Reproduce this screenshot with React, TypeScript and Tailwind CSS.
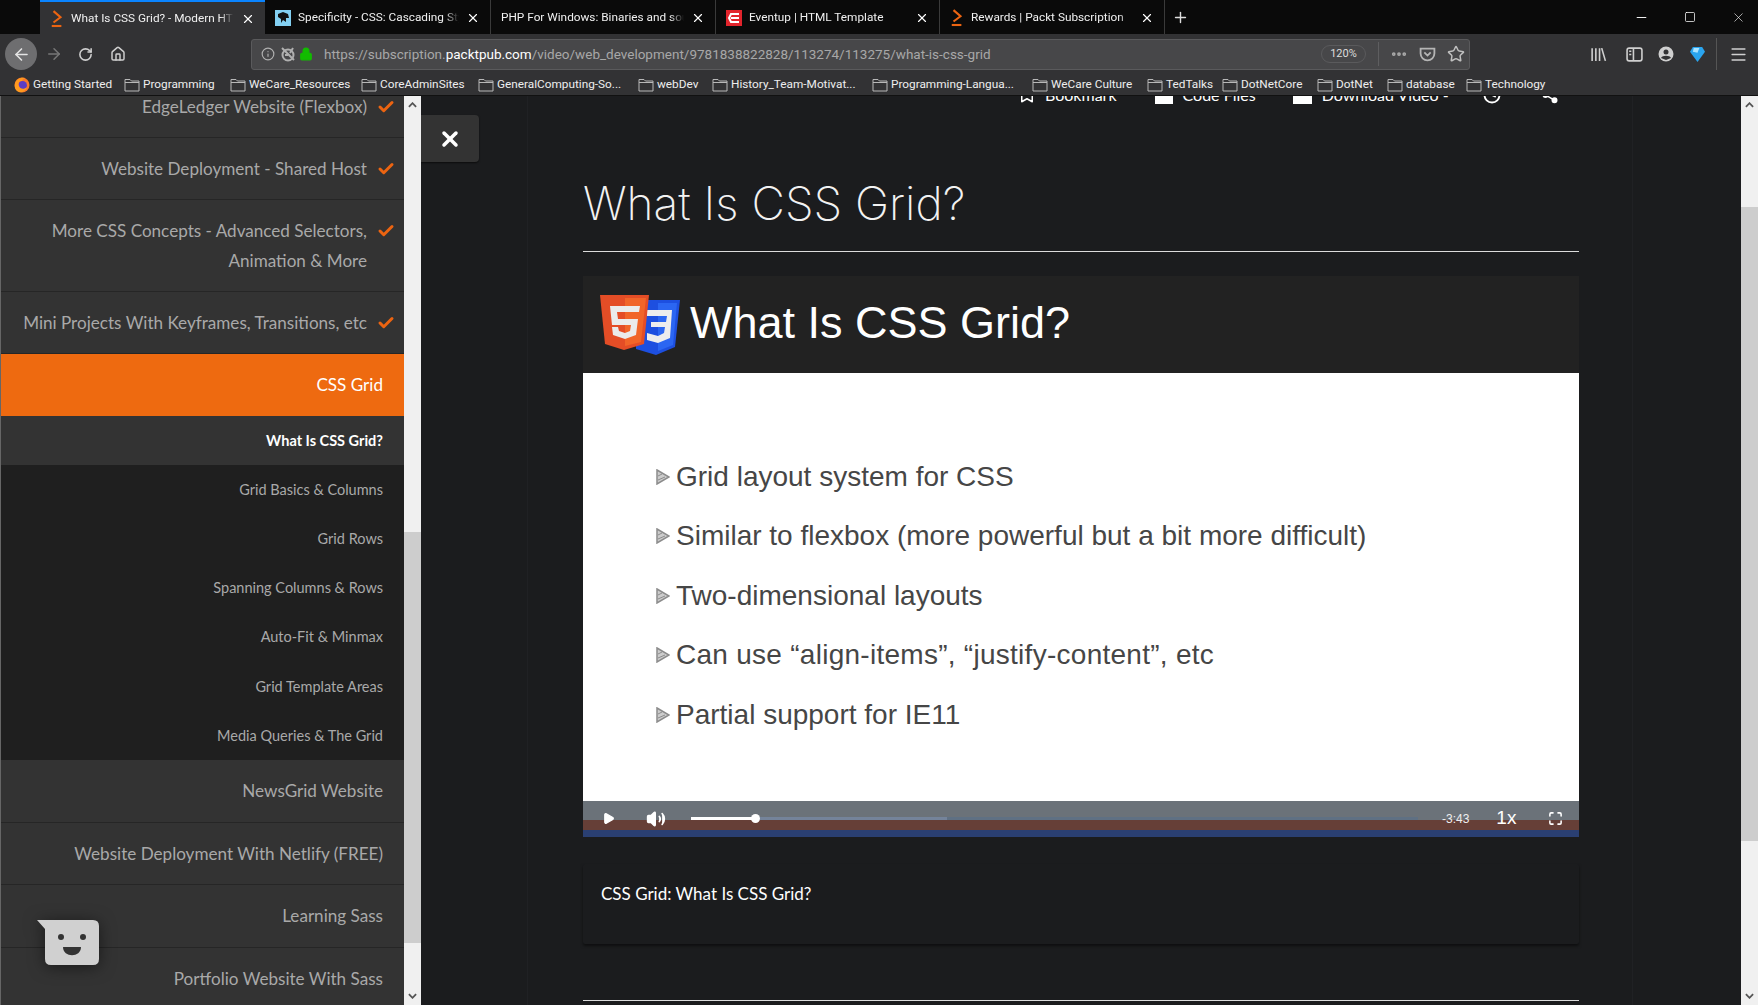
import { ArrowLeft, ArrowRight, Check, Home, Info, Lock, Maximize, Menu, Minus, MoreHorizontal, Play, Plus, RotateCw, Share2, Square, Star, Volume2, X, Clock, Bookmark } from 'lucide-react';

const chrome = "font-['Roboto',sans-serif]";
const lato = "font-['Lato',sans-serif]";

function PacktIcon() {
  return (
    <svg viewBox="0 0 16 20" className="w-[14px] h-[18px] shrink-0">
      <path d="M4 1 L12 8 L4 14" fill="none" stroke="#ec6411" strokeWidth="2.4" />
      <path d="M2 18 H13" stroke="#ec6411" strokeWidth="2.4" />
    </svg>
  );
}

function MdnIcon() {
  return (
    <svg viewBox="0 0 16 16" className="w-4 h-4 shrink-0">
      <rect width="16" height="16" fill="#83d0f2" />
      <path d="M3 4 L8 2 L13 4 L14 8 L11 8 L11 12 L8 10 L6 13 L6 9 L3 7 Z" fill="#111" />
    </svg>
  );
}

function EventupIcon() {
  return (
    <svg viewBox="0 0 16 16" className="w-4 h-4 shrink-0">
      <rect width="16" height="16" fill="#e2242c" />
      <path d="M13 4 L5 4 L3 8 L5 12 L13 12 M5 8 L13 8" fill="none" stroke="#fff" strokeWidth="2" />
    </svg>
  );
}

function FirefoxIcon() {
  return (
    <svg viewBox="0 0 16 16" className="w-4 h-4 shrink-0">
      <circle cx="8" cy="8" r="7.5" fill="#f9792a" />
      <circle cx="8.5" cy="8.5" r="4.5" fill="#5b3cc4" />
      <path d="M1 7 C2 2 7 0 11 1 C9 2 8 3 8 4 C5 4 4 6 5 9 C6 12 10 13 13 10 C12 14 8 16 5 15 C2 14 0 11 1 7 Z" fill="#ff9a1f" />
    </svg>
  );
}

function FolderIcon() {
  return (
    <svg viewBox="0 0 16 16" className="w-[16px] h-[16px] shrink-0" fill="none" stroke="#b8b8b8" strokeWidth="1">
      <path d="M1 2.500 H6 L7.500 4 H15 V14 H1 Z" />
      <path d="M1 5.500 H15" />
    </svg>
  );
}

const tabs = [
  { title: 'What Is CSS Grid? - Modern HTML', icon: <PacktIcon />, active: true, w: 'w-[225px]' },
  { title: 'Specificity - CSS: Cascading Style', icon: <MdnIcon />, w: 'w-[226px]' },
  { title: 'PHP For Windows: Binaries and sources', w: 'w-[225px]' },
  { title: 'Eventup | HTML Template', icon: <EventupIcon />, w: 'w-[224px]' },
  { title: 'Rewards | Packt Subscription', icon: <PacktIcon />, w: 'w-[225px]' },
];

const bookmarks = [
  { label: 'Getting Started', w: 'w-[110px]', fx: true },
  { label: 'Programming', w: 'w-[106px]' },
  { label: 'WeCare_Resources', w: 'w-[131px]' },
  { label: 'CoreAdminSites', w: 'w-[117px]' },
  { label: 'GeneralComputing-So...', w: 'w-[160px]' },
  { label: 'webDev', w: 'w-[74px]' },
  { label: 'History_Team-Motivat...', w: 'w-[160px]' },
  { label: 'Programming-Langua...', w: 'w-[160px]' },
  { label: 'WeCare Culture', w: 'w-[115px]' },
  { label: 'TedTalks', w: 'w-[75px]' },
  { label: 'DotNetCore', w: 'w-[95px]' },
  { label: 'DotNet', w: 'w-[70px]' },
  { label: 'database', w: 'w-[79px]' },
  { label: 'Technology', w: 'w-[90px]' },
];

function TabStrip() {
  return (
    <div className="h-[34px] bg-[#0a0a0a] flex pl-[40px] items-stretch">
      {tabs.map((t) => (
        <div
          key={t.title}
          className={`${t.w} flex items-center gap-[7px] pl-[10px] pr-[10px] pt-[2px] border-r border-[#3a3a3a] ${t.active ? 'bg-[#323234] border-t-2 border-t-[#0a84ff] border-r-0' : ''}`}
        >
          {t.icon}
          <span className="flex-1 min-w-0 overflow-hidden whitespace-nowrap text-[11.800px] text-[#f0f0f0] [mask-image:linear-gradient(to_left,transparent,black_14px)]">
            {t.title}
          </span>
          <X className="w-[14px] h-[14px] shrink-0 text-white" />
        </div>
      ))}
      <div className="w-[30px] flex items-center justify-center">
        <Plus className="w-[17px] h-[17px] text-[#ddd]" />
      </div>
      <div className="flex-1" />
      <div className="flex items-center pr-[12px] gap-[35px] text-white">
        <Minus className="w-[15px] h-[15px]" strokeWidth={1.5} />
        <Square className="w-[12px] h-[12px]" strokeWidth={1.5} />
        <X className="w-[15px] h-[15px]" strokeWidth={1} />
      </div>
    </div>
  );
}

function Toolbar() {
  return (
    <div className="h-[40px] bg-[#323234] flex items-center text-[#cfcfcf]">
      <div className="ml-[5px] w-[32px] h-[32px] rounded-full bg-[#6e6e70] flex items-center justify-center shrink-0">
        <ArrowLeft className="w-[19px] h-[19px] text-[#e4e4e4]" />
      </div>
      <ArrowRight className="ml-[8px] w-[18px] h-[18px] text-[#777] shrink-0" />
      <RotateCw className="ml-[15px] w-[15px] h-[15px] shrink-0" strokeWidth={2.5} />
      <Home className="ml-[17px] w-[16px] h-[16px] shrink-0" strokeWidth={2.2} />
      <div className="ml-[125px] w-[1219px] h-[31px] rounded-[3px] bg-[#474749] border border-[#5a5a5c] flex items-center pl-[9px] pr-[4px] shrink-0">
        <Info className="w-[14px] h-[14px] text-[#b0b0b0] shrink-0" />
        <svg viewBox="0 0 16 16" className="ml-[5px] w-[16px] h-[16px] shrink-0" fill="none" stroke="#b0b0b0" strokeWidth="2">
          <circle cx="8" cy="9" r="5.500" />
          <path d="M2 2 L14 14 M5 9 H8 M13 2 L10 7" />
        </svg>
        <Lock className="ml-[3px] w-[14px] h-[14px] text-[#12bc00] fill-[#12bc00] shrink-0" />
        <span className="ml-[11px] text-[13.500px] whitespace-nowrap text-[#a8a8a8]">
          https://subscription.<span className="text-white">packtpub.com</span>/video/web_development/9781838822828/113274/113275/what-is-css-grid
        </span>
        <div className="flex-1" />
        <span className="w-[45px] h-[18px] rounded-full border border-[#5a5a5c] text-[11px] text-[#ddd] flex items-center justify-center">120%</span>
        <div className="ml-[12px] w-px h-[24px] bg-[#5e5e60]" />
        <MoreHorizontal className="ml-[11px] w-[18px] h-[18px] text-[#aaa]" strokeWidth={3} />
        <svg viewBox="0 0 16 16" className="ml-[11px] w-[17px] h-[17px]" fill="none" stroke="#b5b5b5" strokeWidth="1.700">
          <path d="M1.500 2.500 H14.500 V7 A6.500 6.500 0 0 1 1.500 7 Z M5 6 L8 9 L11 6" />
        </svg>
        <Star className="ml-[11px] w-[18px] h-[18px] text-[#c0c0c0]" strokeWidth={2} />
      </div>
      <div className="flex-1" />
      <div className="flex items-center pr-[10px]">
        <svg viewBox="0 0 16 16" className="w-[17px] h-[17px]" fill="none" stroke="#cfcfcf" strokeWidth="1.500">
          <path d="M2 2 V14 M5.500 2 V14 M9 2 V14 M11 2 L14.500 14" />
        </svg>
        <svg viewBox="0 0 16 16" className="ml-[19px] w-[17px] h-[17px]" fill="none" stroke="#cfcfcf" strokeWidth="1.500">
          <rect x="1" y="2" width="14" height="12" rx="2" />
          <path d="M7 2 V14 M3 5 H5 M3 8 H5" />
        </svg>
        <svg viewBox="0 0 16 16" className="ml-[15px] w-[16px] h-[16px]">
          <circle cx="8" cy="8" r="7.500" fill="#cfcfcf" />
          <circle cx="8" cy="6" r="2.500" fill="#323234" />
          <path d="M3 12 C4 9 12 9 13 12 L8 14 Z" fill="#323234" />
        </svg>
        <svg viewBox="0 0 16 18" className="ml-[16px] w-[15px] h-[17px]">
          <path d="M3 1 H13 L16 6 L8 17 L0 6 Z" fill="#2aa5ef" />
          <path d="M4 2 H10 L8 7 L3 6 Z" fill="#a9e3ff" />
        </svg>
        <div className="ml-[11px] w-px h-[32px] bg-[#555]" />
        <Menu className="ml-[12px] w-[19px] h-[19px] text-[#d0d0d0]" strokeWidth={2} />
      </div>
    </div>
  );
}

function Bookmarks() {
  return (
    <div className="h-[22px] bg-[#323234] border-b border-[#111] flex items-center pl-[14px] text-[11.800px] text-[#eee]">
      {bookmarks.map((b) => (
        <div key={b.label} className={`${b.w} shrink-0 flex items-center gap-[3px] whitespace-nowrap`}>
          {b.fx ? <FirefoxIcon /> : <FolderIcon />}
          <span>{b.label}</span>
        </div>
      ))}
    </div>
  );
}

const checkedTop = [
  { label: 'EdgeLedger Website (Flexbox)' },
  { label: 'Website Deployment - Shared Host' },
  { label: 'More CSS Concepts - Advanced Selectors, Animation & More', tall: true },
  { label: 'Mini Projects With Keyframes, Transitions, etc' },
];

const subItems = ['What Is CSS Grid?', 'Grid Basics & Columns', 'Grid Rows', 'Spanning Columns & Rows', 'Auto-Fit & Minmax', 'Grid Template Areas', 'Media Queries & The Grid'];
const afterItems = ['NewsGrid Website', 'Website Deployment With Netlify (FREE)', 'Learning Sass', 'Portfolio Website With Sass'];

function Sidebar() {
  return (
    <div className={`w-[404px] shrink-0 h-full overflow-hidden bg-[#333333] border-l border-[#666] ${lato}`}>
      <div className="-mt-[20px]">
        {checkedTop.map((row) => (
          <div
            key={row.label}
            className={`flex justify-end pl-[10px] pr-[9px] gap-[10px] border-b border-[#262626] ${row.tall ? 'h-[92px] items-start pt-[16px]' : 'h-[62px] items-center'}`}
          >
            <span className="text-[17.100px] leading-[30px] text-[#a9a9a9] text-right">{row.label}</span>
            <Check className={`w-[18px] h-[18px] shrink-0 text-[#ec6411] ${row.tall ? 'mt-[6px]' : ''}`} strokeWidth={4} />
          </div>
        ))}
        <div className="h-[62px] bg-[#ee6a10] flex items-center justify-end pr-[21px] text-[17.100px] text-white">CSS Grid</div>
        {subItems.map((s, i) => (
          <div
            key={s}
            className={`h-[49.200px] flex items-center justify-end pr-[21px] text-[14.500px] ${i === 0 ? 'bg-[#333333] text-white font-bold' : 'bg-[#1f1f1f] text-[#a9a9a9]'}`}
          >
            {s}
          </div>
        ))}
        {afterItems.map((s) => (
          <div key={s} className="h-[62.500px] flex items-center justify-end pr-[21px] text-[17.100px] text-[#a9a9a9] border-b border-[#262626]">
            {s}
          </div>
        ))}
      </div>
    </div>
  );
}

function Scrollbar({ before, thumb, after }: { before: string; thumb: string; after: string }) {
  return (
    <div className="w-[17px] shrink-0 h-full bg-[#f0f0f0] flex flex-col items-center">
      <svg viewBox="0 0 10 6" className="mt-[6px] w-[9px] h-[6px] shrink-0" fill="none" stroke="#555" strokeWidth="2">
        <path d="M1 5 L5 1 L9 5" />
      </svg>
      <div className={before} />
      <div className={`${thumb} w-full bg-[#cdcdcd]`} />
      <div className={after} />
      <svg viewBox="0 0 10 6" className="mb-[6px] w-[9px] h-[6px] shrink-0" fill="none" stroke="#555" strokeWidth="2">
        <path d="M1 1 L5 5 L9 1" />
      </svg>
    </div>
  );
}

function VideoLogo() {
  return (
    <svg viewBox="0 0 80 60" className="w-[80px] h-[60px] shrink-0">
      <path d="M36 5 H80 L75 52 L56 60 L36 54 Z" fill="#1d4fe0" />
      <path d="M58 8 H77 L73 50 L58 56 Z" fill="#2b66f2" />
      <path d="M47 15 H72 L70 43 L58 48 L47 45 V38 L58 41 L64 38 L65 32 H51 V27 H66 L67 21 H47 Z" fill="#ededed" />
      <path d="M0 0 H49 L44 49 L24 55 L5 49 Z" fill="#e44d26" />
      <path d="M25 3 H46 L41 47 L25 51 Z" fill="#f16529" />
      <path d="M10 11 H40 L39 17 H17 L18 24 H38 L36 40 L25 44 L13 40 L12 32 H18 L19 36 L25 38 L30 36 L31 30 H12 Z" fill="#ebebeb" />
    </svg>
  );
}

function SlideBullet({ text, wide }: { text: string; wide?: boolean }) {
  return (
    <div className="h-[59.500px] flex items-center">
      <svg viewBox="0 0 14 16" className="w-[14px] h-[16px] shrink-0">
        <path d="M1 1 L13 8 L1 15 Z" fill="#ccc" stroke="#8c8c8c" strokeWidth="1.500" />
        <path d="M2 11 L9 8 M2 7 L6 5" stroke="#8c8c8c" strokeWidth="1" />
      </svg>
      <span className={`ml-[6px] text-[28px] text-[#464646] whitespace-nowrap font-['Liberation_Sans',sans-serif] ${wide ? 'tracking-[0.27px]' : ''}`}>{text}</span>
    </div>
  );
}

function VideoPlayer() {
  return (
    <div className="w-full">
      <div className="h-[97px] bg-[#222222] flex items-center pl-[17px]">
        <VideoLogo />
        <span className="ml-[10px] pb-[4px] text-[45px] text-white font-['Liberation_Sans',sans-serif]">What Is CSS Grid?</span>
      </div>
      <div className="h-[428px] bg-white pl-[73px] pt-[74px]">
        <SlideBullet text="Grid layout system for CSS" />
        <SlideBullet text="Similar to flexbox (more powerful but a bit more difficult)" />
        <SlideBullet text="Two-dimensional layouts" />
        <SlideBullet text="Can use “align-items”, “justify-content”, etc" wide />
        <SlideBullet text="Partial support for IE11" />
      </div>
      <div className="relative h-[36px] bg-[#2a3f72]">
        <div className="h-[19px] bg-[#6b7279]" />
        <div className="h-[10px] bg-[#663f37]" />
        {/* player controls sit over the coloured bands of the video frame */}
        <div className="absolute inset-x-0 top-0 h-[36px] flex items-center text-white pb-[1px]">
          <Play className="ml-[19px] w-[13px] h-[15px] fill-white shrink-0" />
          <Volume2 className="ml-[31px] w-[20px] h-[20px] fill-white shrink-0" />
          <div className="ml-[25px] w-[727px] h-[3px] bg-[#5f7083] flex items-center shrink-0">
            <div className="w-[62px] h-[3px] bg-white" />
            <div className="w-[9px] h-[9px] rounded-full bg-white -ml-[2px]" />
            <div className="w-[187px] h-[3px] bg-[#74839a]" />
          </div>
          <span className="ml-[24px] text-[12px] text-[#eee] font-['Liberation_Sans',sans-serif]">-3:43</span>
          <span className="ml-[27px] text-[19px] text-white font-['Liberation_Sans',sans-serif]">1x</span>
          <Maximize className="ml-[32px] w-[15px] h-[15px] shrink-0" strokeWidth={2.5} />
        </div>
      </div>
    </div>
  );
}

function Main() {
  return (
    <div className="flex-1 min-w-0 h-full overflow-hidden bg-[#1b1c1e] flex">
      <div className="w-[107px] shrink-0 border-r border-[#202124] h-full">
        <div className="mt-[19px] w-[58px] h-[47px] rounded-r-[4px] bg-[#333333] flex items-center justify-center shadow-[0_1px_2px_rgba(0,0,0,0.6)]">
          <X className="w-[24px] h-[24px] text-white" strokeWidth={3.5} />
        </div>
      </div>
      <div className="w-[1105px] shrink-0 h-full border-r border-[#202124] pl-[55px] pr-[53px]">
        {/* toolbar is scrolled partly out of view */}
        <div className="-mt-[10px] h-[18px] flex items-center text-white text-[16px] font-['Lato',sans-serif]">
          <Bookmark className="ml-[435px] w-[18px] h-[18px] shrink-0" />
          <span className="ml-[9px] whitespace-nowrap">Bookmark</span>
          <div className="ml-[38px] w-[18px] h-[18px] bg-white shrink-0" />
          <span className="ml-[10px] whitespace-nowrap">Code Files</span>
          <div className="ml-[37px] w-[19px] h-[18px] bg-white shrink-0" />
          <span className="ml-[10px] whitespace-nowrap">Download Video -</span>
          <Clock className="ml-[34px] w-[18px] h-[18px] shrink-0" strokeWidth={2.5} />
          <Share2 className="ml-[40px] w-[18px] h-[18px] fill-white shrink-0" />
        </div>
        <div className="h-[148px] pt-[68px] border-b border-[#dcdcdc]">
          <h1 className="text-[46px] leading-[62px] font-extralight text-[#f2f2f2] font-['Inter',sans-serif]">What Is CSS Grid?</h1>
        </div>
        <div className="mt-[24px]">
          <VideoPlayer />
        </div>
        <div className={`mt-[27px] h-[80px] bg-[#1b1c1e] rounded-[2px] shadow-[0_2px_3px_rgba(0,0,0,0.5)] pl-[18px] pt-[17px] text-[17px] text-white ${lato}`}>
          CSS Grid: What Is CSS Grid?
        </div>
        <div className="mt-[56px] h-px bg-[#dcdcdc]" />
      </div>
      <div className="flex-1" />
    </div>
  );
}

function ChatWidget() {
  return (
    <div className="absolute left-[37px] top-[824px] w-[62px] h-[45px]">
      <svg viewBox="0 0 62 45" className="w-[62px] h-[45px] drop-shadow-[0_2px_8px_rgba(0,0,0,0.5)]">
        <path d="M0 0 H56 Q62 0 62 6 V39 Q62 45 56 45 H14 Q8 45 8 39 V9 Z" fill="#d0d0d0" />
        <circle cx="24" cy="17" r="3" fill="#333" />
        <circle cx="46" cy="17" r="3" fill="#333" />
        <path d="M26 27 H44 C44 38 26 38 26 27 Z" fill="#333" />
      </svg>
    </div>
  );
}

export default function App() {
  return (
    <div className={`h-screen w-full flex flex-col overflow-hidden bg-[#1b1c1e] ${chrome}`}>
      <TabStrip />
      <Toolbar />
      <Bookmarks />
      <div className="relative flex-1 min-h-0 flex">
        <Sidebar />
        <Scrollbar before="h-[424px] shrink-0" thumb="h-[411px] shrink-0" after="flex-1" />
        <Main />
        <Scrollbar before="h-[99px] shrink-0" thumb="h-[634px] shrink-0" after="flex-1" />
        <ChatWidget />
      </div>
    </div>
  );
}
